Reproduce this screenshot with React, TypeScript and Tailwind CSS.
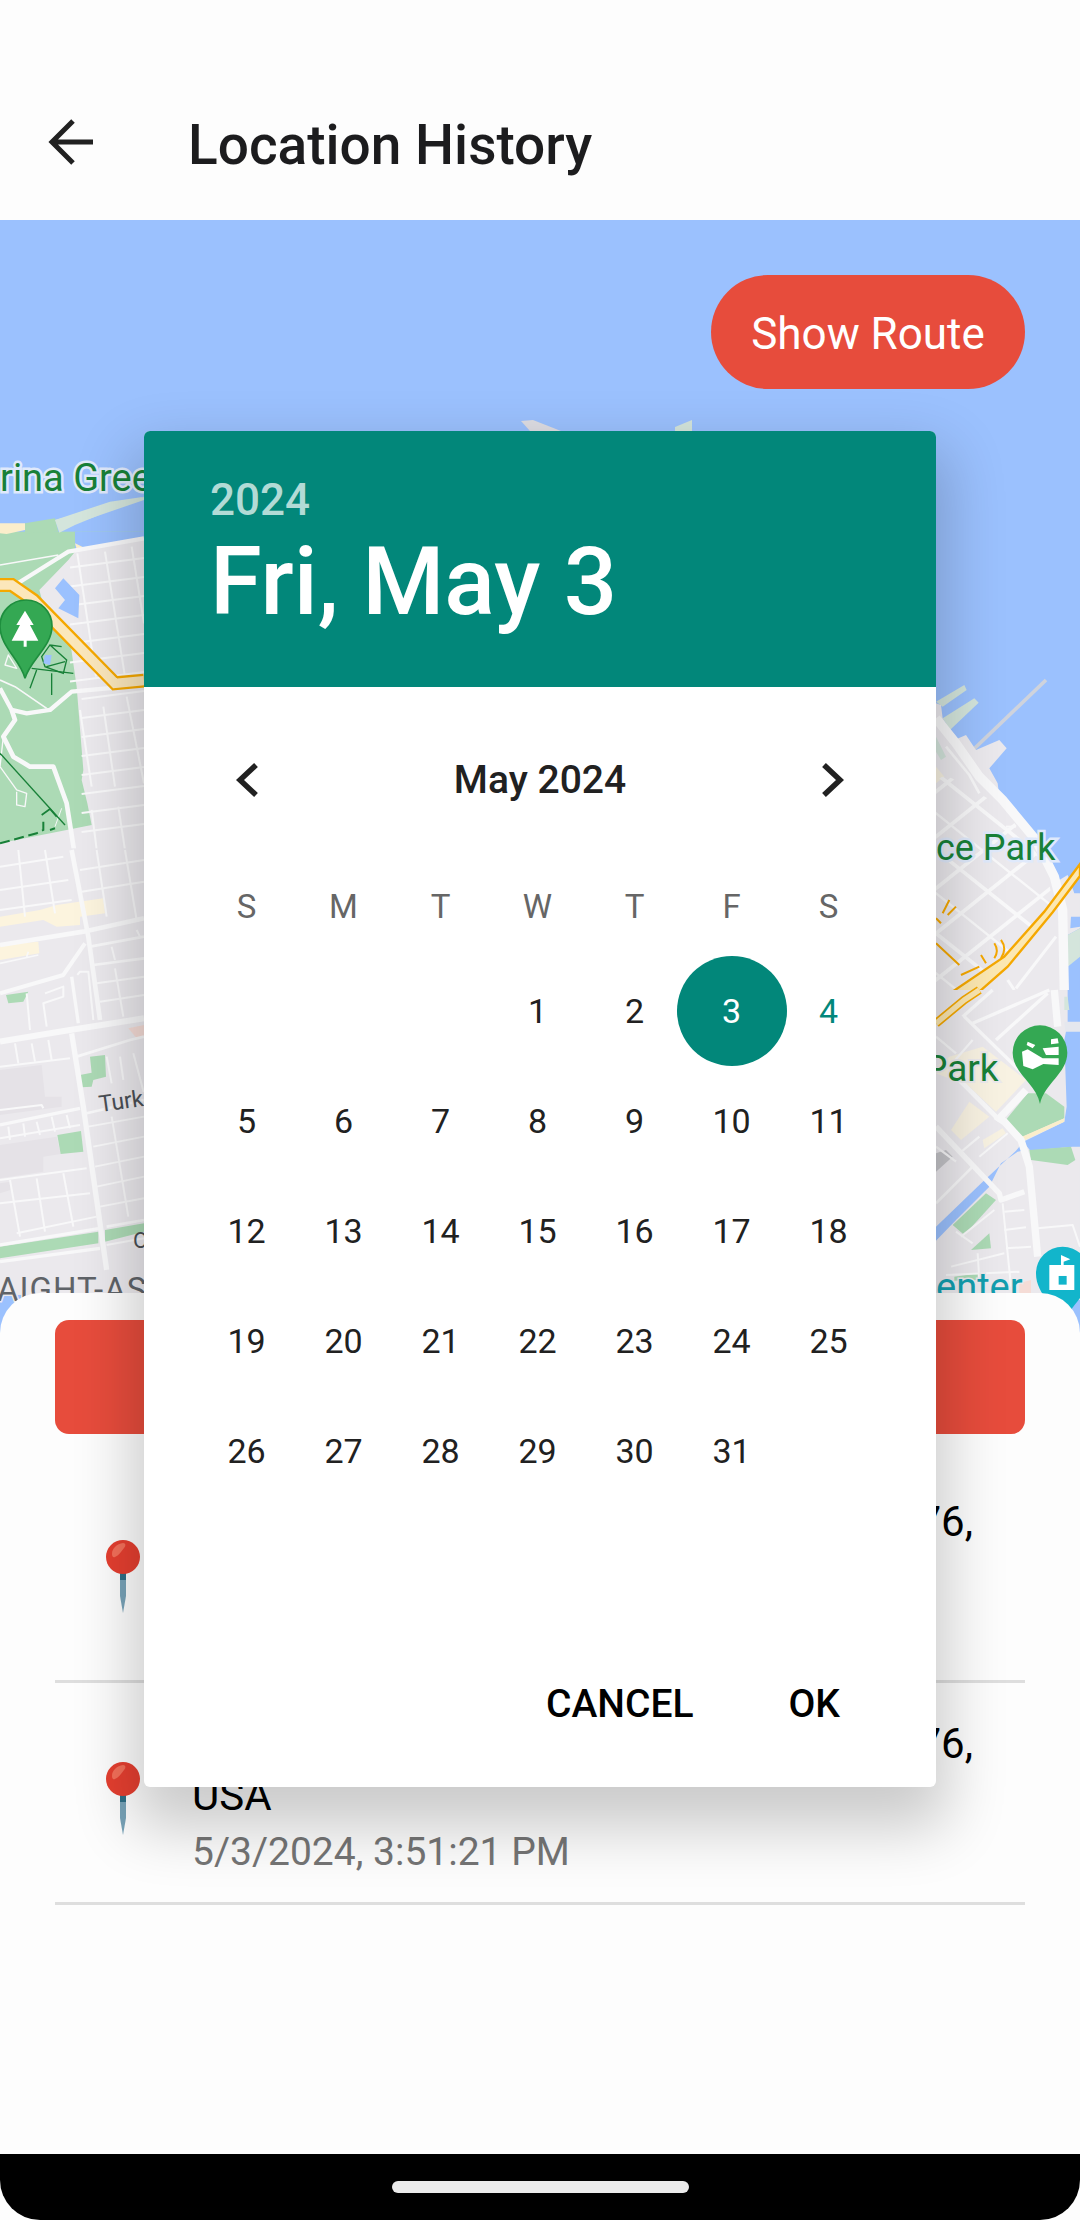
const weekdays = ["S", "M", "T", "W", "T", "F", "S"];
// May 2024 starts on a Wednesday, so three blank cells come first
const days: (number | null)[] = [null, null, null, ...Array.from({ length: 31 }, (_, i) => i + 1)];

const LAND = "#ebe9ed";
const WATER = "#9bc1fe";
const PARK = "#acdab5";
const PALE = "#d4e5dc";
const SAND = "#f8f2e2";
const ROAD = "#f8f8f9";

// [path, stroke width] pairs, all in 3x crop coordinates of the strip they belong to
const parkRoads: [string, number][] = [
  ["M45 225 L165 150 L205 125 L432 85", 13],
  ["M0 165 L175 135", 4],
  ["M432 525 L215 545 L150 600 L80 610 L35 600 L0 535", 13],
  ["M35 600 L45 630 L10 680 L40 740 L90 770 L160 770 L200 880 L222 1020", 14],
  ["M0 510 L45 530 L140 595", 5],
  ["M15 465 L25 435 L50 475 Z", 4],
  ["M10 680 L0 770", 4],
  ["M0 770 L50 840 L80 850 L75 890 L50 885 L50 845", 4],
  ["M165 950 L185 895", 3],
];

const cityRows: [string, number][] = [
  ["M0 285 L250 245 L432 205", 14],
  ["M270 290 L432 260", 8],
  ["M280 345 L432 325", 8],
  ["M0 430 L190 375 L255 280", 12],
  ["M215 0 L265 260 L300 510", 14],
  ["M215 380 L235 520", 10],
  ["M232 375 L240 365 L265 365 L280 510", 6],
  ["M0 575 L210 540 L432 505", 18],
  ["M215 550 L250 770 L320 1260", 16],
  ["M0 650 L210 625", 6],
  ["M45 580 L55 640 M95 580 L105 635 M145 570 L155 630", 6],
  ["M0 825 L240 775", 10],
  ["M0 865 L240 825", 6],
  ["M25 830 L30 870 M70 820 L75 860 M110 815 L120 855 M155 800 L165 845 M200 795 L210 835", 6],
  ["M0 990 L260 955", 6],
  ["M30 990 L60 1160 M110 985 L135 1145 M190 970 L220 1130", 6],
  ["M0 1060 L270 1030", 6],
  ["M50 1150 L290 1100", 6],
  ["M0 1185 L300 1135", 10],
  ["M0 1235 L300 1195", 10],
  ["M320 1130 L432 1110", 8],
  ["M320 1185 L432 1165", 6],
  ["M290 400 L432 380 M300 455 L432 435", 6],
  ["M345 355 L370 500 M335 290 L345 330 M410 240 L420 260", 6],
  ["M230 620 L390 570 L432 560", 8],
  ["M320 620 L335 700 M360 620 L370 690 M400 610 L432 730", 6],
  ["M260 790 L432 750", 8],
  ["M265 830 L432 800 M280 890 L432 860 M285 950 L432 920 M290 1010 L432 980 M300 1070 L432 1045", 6],
  ["M335 800 L385 1100", 6],
  ["M0 50 L190 20 M0 120 L205 90 M0 180 L215 150 M240 60 L432 30 M245 125 L432 95", 6],
  ["M55 0 L75 200 M135 0 L165 190 M290 0 L320 200 M375 0 L410 210", 6],
  ["M135 430 L190 410 L190 440 L130 460 L140 530", 6],
  ["M80 430 L90 540", 6],
  ["M0 340 L115 315 M85 305 L80 320", 5],
  ["M0 780 L125 765 L130 775", 6],
];

// downtown grid, clipped to the land left of the embarcadero
const downtownNE = [335, 470, 625, 760, 900, 1040];
const downtownSE = [280, 400, 510, 640, 760, 880];

const missionRoads: [string, number][] = [
  ["M0 410 L190 610 L195 630 L265 605", 16],
  ["M60 260 L190 390", 14],
  ["M85 80 L270 260", 10],
  ["M110 100 L340 0", 10],
  ["M180 150 L335 10", 10],
  ["M170 0 L80 80", 10],
  ["M0 140 L60 190 M40 230 L110 150", 7],
  ["M0 470 L60 515 M70 490 L130 440", 7],
  ["M0 640 L110 530", 8],
  ["M130 500 L215 430", 6],
  ["M200 640 L225 890", 6],
  ["M205 665 L265 660 M205 720 L270 712 M210 775 L285 770", 6],
  ["M125 790 L130 870", 6],
  ["M45 830 L205 790", 6],
  ["M30 855 L250 845", 6],
  ["M305 715 L410 705 L432 770", 6],
  ["M60 725 L110 760", 6],
  ["M75 740 L175 660", 6],
];

function MapView() {
  return (
    <svg viewBox="0 220 1080 1120" className="block h-[1120px] w-[1080px]">
      <defs>
        <clipPath id="downtown">
          <polygon points="0,300 30,285 200,380 330,560 355,690 215,850 60,930 0,930" />
        </clipPath>
      </defs>
      <rect x="0" y="220" width="1080" height="1120" fill={WATER} />

      {/* bits of shore poking out above the dialog */}
      <polygon points="521,421 533,420 561,431 530,431" fill="#dedde3" />
      <polygon points="675,427 692,420 692,431 675,431" fill={PALE} />
      <polygon points="55,520 144,497 144,500 77,523 60,530" fill={PALE} />

      {/* left strip, top part: marina and park */}
      <g transform="translate(0 510) scale(0.3333)">
        <rect x="0" y="65" width="432" height="960" fill={PARK} />
        <polygon points="0,40 75,40 75,60 20,72 0,70" fill="#fbeecb" />
        <polygon points="75,40 165,25 175,65 75,70" fill={PARK} />
        <polygon points="165,30 330,-25 432,-40 225,45 178,68" fill={PALE} />
        <rect x="225" y="65" width="207" height="60" fill={WATER} />
        <polygon points="225,100 250,112 230,118" fill="#fbeecb" />
        <polygon
          points="118,240 205,150 225,125 432,88 432,1020 0,1020 0,1000 275,945 262,880 245,810 250,780 230,530 205,355 150,310 130,285"
          fill={LAND}
        />
        {[200, 257, 314, 371, 428, 485, 542, 599, 656, 713, 770, 827, 884, 941, 998].map((c) => (
          <line key={c} x1={c < 560 ? 210 : 245} y1={c - 0.13 * (c < 560 ? 210 : 245)} x2="432" y2={c - 56} stroke={ROAD} strokeWidth="6" />
        ))}
        <path d="M232 130 L288 500 M315 125 L375 500 M395 110 L432 340" stroke={ROAD} strokeWidth="6" fill="none" />
        <path d="M240 600 L275 830 M310 590 L345 830 M380 560 L432 820 M275 900 L290 1020 M355 890 L375 1020" stroke={ROAD} strokeWidth="6" fill="none" />
        <polygon points="165,235 190,205 238,255 235,325 175,295 195,270" fill={WATER} />
        <g fill="none" stroke={ROAD} strokeLinejoin="round">
          {parkRoads.map(([d, w], i) => (
            <path key={i} d={d} strokeWidth={w} />
          ))}
        </g>
        <path d="M0 225 L35 225 L100 270 L345 520 L432 512" fill="none" stroke="#f5a800" strokeWidth="42" />
        <path d="M0 225 L35 225 L100 270 L345 520 L432 512" fill="none" stroke="#fbe7bb" strokeWidth="28" />
        <g fill="none" stroke="#188038" strokeWidth="4">
          <path d="M90 535 L110 480 M155 555 L155 490 M95 475 L220 490" />
          <path d="M125 440 L150 405 L200 450 L190 490 L135 470 Z M150 405 L185 410 M140 470 L195 455" />
        </g>
        <polygon points="135,435 155,435 150,465 130,460" fill={WATER} />
        <path d="M0 730 L195 945" stroke="#188038" strokeWidth="4" fill="none" />
        <path d="M125 915 L150 897 L170 920" stroke="#188038" strokeWidth="5" fill="none" />
        <path d="M0 1000 L110 970 L130 960 L130 935 M150 960 L165 955" stroke="#188038" strokeWidth="6" strokeDasharray="30 14" fill="none" />
        <path d="M75 505 C62 450 0 410 0 348 A78 78 0 0 1 156 348 C156 410 90 450 75 505 Z" fill="#34a853" stroke="#1e8e3e" strokeWidth="5" />
        <path d="M75 302 L101 345 L90 345 L115 392 L80 392 L80 410 L71 410 L71 392 L35 392 L60 345 L49 345 Z" fill="#fff" />
      </g>

      {/* left strip, lower part: city blocks */}
      <g transform="translate(0 850) scale(0.3333)">
        <rect x="0" y="-5" width="432" height="1340" fill={LAND} />
        <polygon points="0,660 125,645 135,740 185,740 185,770 0,795" fill="#e5e2e7" />
        <polygon points="0,885 170,860 182,912 130,920 130,965 0,985" fill="#e5e2e7" />
        <polygon points="0,1000 30,995 32,1020 0,1030" fill="#e5e2e7" />
        <polygon points="0,200 120,180 170,165 310,145 315,190 240,200 240,225 170,230 130,210 0,230" fill="#fcf4de" />
        <polygon points="0,285 115,275 118,310 0,330" fill="#fcf4de" />
        <polygon points="385,535 432,525 432,560 410,565" fill="#f5dcd6" />
        <polygon points="270,620 315,615 318,680 280,690 275,710 243,712 240,675 275,668" fill={PARK} />
        <polygon points="172,855 243,843 250,905 182,912" fill={PARK} />
        <polygon points="18,435 85,425 70,455 25,460" fill={PARK} />
        <polygon points="0,1190 295,1145 295,1180 0,1225" fill={PARK} />
        <polygon points="315,1140 432,1120 432,1145 315,1175" fill={PARK} />
        <g fill="none" stroke={ROAD} strokeLinejoin="round">
          {cityRows.map(([d, w], i) => (
            <path key={i} d={d} strokeWidth={w} />
          ))}
        </g>
      </g>

      {/* labels of the left strip */}
      <text x="0" y="491" fill="#188038" stroke="#dfe9fb" strokeWidth="5" paintOrder="stroke" className="font-['Roboto'] text-[38px]">
        rina Green
      </text>
      <text x="100" y="1112" fill="#4a4f55" stroke={LAND} strokeWidth="3" paintOrder="stroke" transform="rotate(-8 100 1112)" className="font-['Roboto'] text-[23px]">
        Turk Blvd
      </text>
      <text x="133" y="1248" fill="#4a4f55" className="font-['Roboto'] text-[22px]">
        O
      </text>
      <text x="-3" y="1301" fill="#5f6368" stroke={LAND} strokeWidth="3" paintOrder="stroke" letterSpacing="1" className="font-['Roboto'] text-[33px]">
        AIGHT-ASHBURY
      </text>

      {/* right strip, top part: embarcadero */}
      <g transform="translate(936 680) scale(0.3333)">
        <polygon points="0,65 85,15 92,30 20,80" fill={PALE} />
        <polygon points="20,115 115,55 128,68 42,150" fill={PALE} />
        <path d="M330 0 L95 225" stroke="#cfd3dc" strokeWidth="11" fill="none" />
        <polygon
          points="0,70 15,75 20,115 42,150 55,180 90,165 120,210 190,180 212,205 160,265 185,310 190,350 240,410 290,470 345,560 370,600 395,585 415,640 432,640 432,710 405,710 403,745 432,740 432,745 395,765 395,935 0,935"
          fill={LAND}
        />
        <polygon points="240,410 255,420 300,480 290,490" fill="#c9e3d0" />
        <polygon points="395,765 432,745 432,830 395,860" fill={PALE} />
        <polygon points="395,860 432,850 432,935 395,935" fill={WATER} />
        <polygon points="0,170 30,230 15,240 0,215" fill={PALE} />
        <polygon points="0,260 25,290 0,310" fill={SAND} />
        <g clipPath="url(#downtown)" stroke={ROAD}>
          {downtownNE.map((c) => (
            <line key={c} x1="-10" y1={c + 8} x2="440" y2={c - 352} strokeWidth="11" />
          ))}
          {downtownSE.map((c, i) => (
            <line key={c} x1="-10" y1={c - 8} x2="440" y2={c + 352} strokeWidth={i % 2 === 0 ? 11 : 7} />
          ))}
        </g>
        <path d="M0 115 L60 190 L130 290 L200 360 L300 480 L355 590 L380 690 L385 935" fill="none" stroke={ROAD} strokeWidth="28" />
        <path d="M30 200 L100 285 L130 340" fill="none" stroke={ROAD} strokeWidth="8" />
        <path d="M210 440 L240 440" fill="none" stroke={ROAD} strokeWidth="6" />
        <path d="M240 925 L360 770 M215 900 L235 930" fill="none" stroke={ROAD} strokeWidth="9" />
        <polygon points="432,552 432,588 350,697 215,860 130,935 50,935 205,830 325,695" fill="#fce8b2" stroke="#f5a800" strokeWidth="7" />
        <path
          d="M175 790 C185 805 185 820 175 835 M195 780 C210 800 205 820 195 835 M135 825 L150 850 M75 885 L130 860 M40 660 L20 700 M60 680 L35 705 M0 715 L15 730 M0 790 L70 855"
          fill="none"
          stroke="#f5a800"
          strokeWidth="6"
        />
      </g>

      {/* right strip, lower part: mission bay */}
      <g transform="translate(936 990) scale(0.3333)">
        <rect x="0" y="0" width="432" height="930" fill={LAND} />
        <polygon points="395,0 432,0 432,470 410,470 283,482 262,455 385,395 392,350 385,150 395,100" fill={WATER} />
        <polygon points="385,95 432,95 432,125 388,125" fill="#e5e7ee" />
        <polygon points="0,710 130,585 240,482 262,455 270,480 245,485 195,520 160,590 60,690 0,752" fill={WATER} />
        <polygon points="280,480 405,470 418,510 395,525 285,510" fill={PARK} />
        <polygon points="50,705 150,610 180,630 85,735" fill={PARK} />
        <polygon points="105,780 160,730 165,775" fill={PARK} />
        <polygon points="205,395 275,310 330,310 385,350 385,385 260,440" fill={PARK} />
        <polygon points="258,440 385,385 385,395 262,452" fill="#fbeecb" />
        <polygon points="385,20 395,20 400,60 385,60" fill={PALE} />
        <polygon points="55,860 125,850 125,870 55,872" fill={PARK} />
        <polygon points="0,230 40,200 140,170 270,270 180,365 100,290 0,250" fill={SAND} />
        <polygon points="45,420 100,335 160,380 75,450" fill={SAND} />
        <polygon points="140,450 200,415 210,430 145,475" fill={SAND} />
        <polygon points="0,490 30,480 50,500 0,545" fill="#c4c4c8" />
        <polygon points="250,880 285,870 285,910 250,910" fill="#f5dcd6" />
        <g fill="none" stroke={ROAD} strokeLinejoin="round">
          {missionRoads.map(([d, w], i) => (
            <path key={i} d={d} strokeWidth={w} />
          ))}
        </g>
        <path d="M270 300 L190 385 L205 395 L255 450 L280 530 L305 800" fill="none" stroke={ROAD} strokeWidth="22" />
        <path d="M355 0 L365 110" fill="none" stroke={ROAD} strokeWidth="22" />
        <path d="M0 100 L85 30 L130 0" fill="none" stroke="#f5a800" strokeWidth="26" />
        <path d="M0 100 L85 30 L130 0" fill="none" stroke="#fce8b2" strokeWidth="16" />
        <path d="M312 342 C300 280 230 250 230 188 A82 82 0 0 1 394 188 C394 250 325 280 312 342 Z" fill="#34a853" />
        <path
          d="M258 185 L275 178 L320 205 L368 205 L368 225 L322 222 L290 238 L262 228 Z M275 155 L298 165 L290 175 L272 165 Z M345 148 L365 145 L368 160 L345 163 Z M320 175 L368 170 L368 195 L330 195 Z"
          fill="#fff"
        />
        <path d="M380 1010 C368 950 300 920 300 850 A80 80 0 0 1 460 850 C460 920 392 950 380 1010 Z" fill="#12b5cb" />
        <path d="M375 795 L403 808 L383 815 L383 825 L415 825 L415 900 L340 900 L340 825 L375 825 Z" fill="#fff" />
        <rect x="368" y="858" width="24" height="26" fill="#12b5cb" />
      </g>

      {/* labels of the right strip */}
      <text x="936" y="860" fill="#188038" stroke="#dfe9fb" strokeWidth="5" paintOrder="stroke" className="font-['Roboto'] text-[36px]">
        ce Park
      </text>
      <text x="924" y="1081" fill="#188038" stroke={LAND} strokeWidth="4" paintOrder="stroke" className="font-['Roboto'] text-[37px]">
        Park
      </text>
      <text x="936" y="1300" fill="#129eaf" stroke={LAND} strokeWidth="3" paintOrder="stroke" className="font-['Roboto'] text-[38px]">
        enter
      </text>
    </svg>
  );
}

function PinIcon() {
  return (
    <svg viewBox="0 0 34 73" className="h-[73px] w-[34px]">
      <path d="M14 32 H20 V56 L17 73 L14 56 Z" fill="#78a3b8" />
      <rect x="14" y="32" width="6" height="8" fill="#2f6f86" />
      <circle cx="17" cy="17" r="17" fill="#e53f30" />
      <path d="M6 14 C6 8 11 4 17 3 C20 3 20 6 18 8 C15 12 12 16 9 17 C7 18 6 16 6 14 Z" fill="#f4705a" />
    </svg>
  );
}

function HistoryRow() {
  return (
    <div className="flex h-[222px] items-center border-b-[3px] border-[#dedede]">
      <div className="flex w-[137px] justify-center">
        <div className="ml-[-1px] mt-[11px]">
          <PinIcon />
        </div>
      </div>
      <div className="mt-[14px] flex-1">
        <p className="pr-[52px] text-right text-[42px] leading-[52px] text-black">76,</p>
        <p className="text-[42px] leading-[52px] text-black">USA</p>
        <p className="text-[39px] leading-[60px] text-[#757575]">5/3/2024, 3:51:21 PM</p>
      </div>
    </div>
  );
}

export default function App() {
  return (
    <div className="relative h-[2220px] w-[1080px] overflow-hidden bg-[#fdfdfd] font-['Roboto',sans-serif]">
      {/* Header */}
      <div className="flex h-[220px] items-center bg-[#fdfdfd] pt-[68px]">
        <svg viewBox="0 0 48 48" className="ml-[48px] mt-[-4px] h-[48px] w-[48px]" fill="none" stroke="#212121" strokeWidth="5">
          <path d="M45 24 H5 M25 3 L4 24 L25 45" />
        </svg>
        <h1 className="ml-[92px] mt-[2px] text-[55px] font-medium text-[#1c1c1e]">Location History</h1>
      </div>

      {/* Map */}
      <div className="relative h-[1120px]">
        <MapView />
        <button className="absolute right-[55px] top-[55px] h-[114px] w-[314px] rounded-[57px] bg-[#e74c3c] pt-[4px] text-[44px] text-white">
          Show Route
        </button>
      </div>

      {/* Bottom sheet */}
      <div className="relative mt-[-47px] h-[861px] rounded-t-[40px] bg-[#fdfdfd] px-[55px] pt-[27px]">
        <div className="mb-[27px] h-[114px] rounded-[14px] bg-[#e74c3c]" />
        <HistoryRow />
        <HistoryRow />
      </div>

      {/* Android nav bar */}
      <div className="relative flex h-[66px] justify-center rounded-b-[40px] bg-black pt-[27px]">
        <div className="h-[12px] w-[297px] rounded-full bg-[#ebebeb]" />
      </div>

      {/* Date picker dialog */}
      <div className="absolute left-[144px] top-[431px] flex h-[1356px] w-[792px] flex-col overflow-hidden rounded-[6px] bg-white shadow-[0_30px_60px_12px_rgba(0,0,0,0.2)]">
        <div className="h-[256px] bg-[#02877a] pl-[66px] pt-[45px]">
          <p className="text-[44px] font-medium leading-[48px] text-[#b2dbd6]">2024</p>
          <p className="mt-[6px] text-[94px] font-medium leading-[104px] text-white">Fri, May 3</p>
        </div>

        <div className="flex h-[186px] items-center justify-between pl-[92px] pr-[92px]">
          <svg viewBox="0 0 22 34" className="h-[34px] w-[22px]" fill="none" stroke="#212121" strokeWidth="5.5">
            <path d="M20 2 L4 17 L20 32" />
          </svg>
          <span className="text-[39px] font-medium text-[#212121]">May 2024</span>
          <svg viewBox="0 0 22 34" className="h-[34px] w-[22px]" fill="none" stroke="#212121" strokeWidth="5.5">
            <path d="M2 2 L18 17 L2 32" />
          </svg>
        </div>

        <div className="grid h-[66px] grid-cols-[repeat(7,97px)] items-center pl-[54px] pt-[2px]">
          {weekdays.map((d, i) => (
            <span key={i} className="text-center text-[33px] text-[#666666]">
              {d}
            </span>
          ))}
        </div>

        <div className="mt-[17px] grid auto-rows-[110px] grid-cols-[repeat(7,97px)] pl-[54px]">
          {days.map((d, i) => (
            <div key={i} className="relative flex items-center justify-center">
              {d === 3 && <div className="absolute left-[-6.5px] top-0 h-[110px] w-[110px] rounded-full bg-[#02877a]" />}
              <span
                className={
                  d === 3
                    ? "relative text-[34px] text-white"
                    : d === 4
                      ? "text-[34px] text-[#02877a]"
                      : "text-[34px] text-[#212121]"
                }
              >
                {d}
              </span>
            </div>
          ))}
        </div>

        <div className="mt-auto flex h-[168px] items-center justify-end gap-[95px] pr-[96px] pt-[2px] text-[39px] font-medium text-black">
          <span>CANCEL</span>
          <span>OK</span>
        </div>
      </div>
    </div>
  );
}
